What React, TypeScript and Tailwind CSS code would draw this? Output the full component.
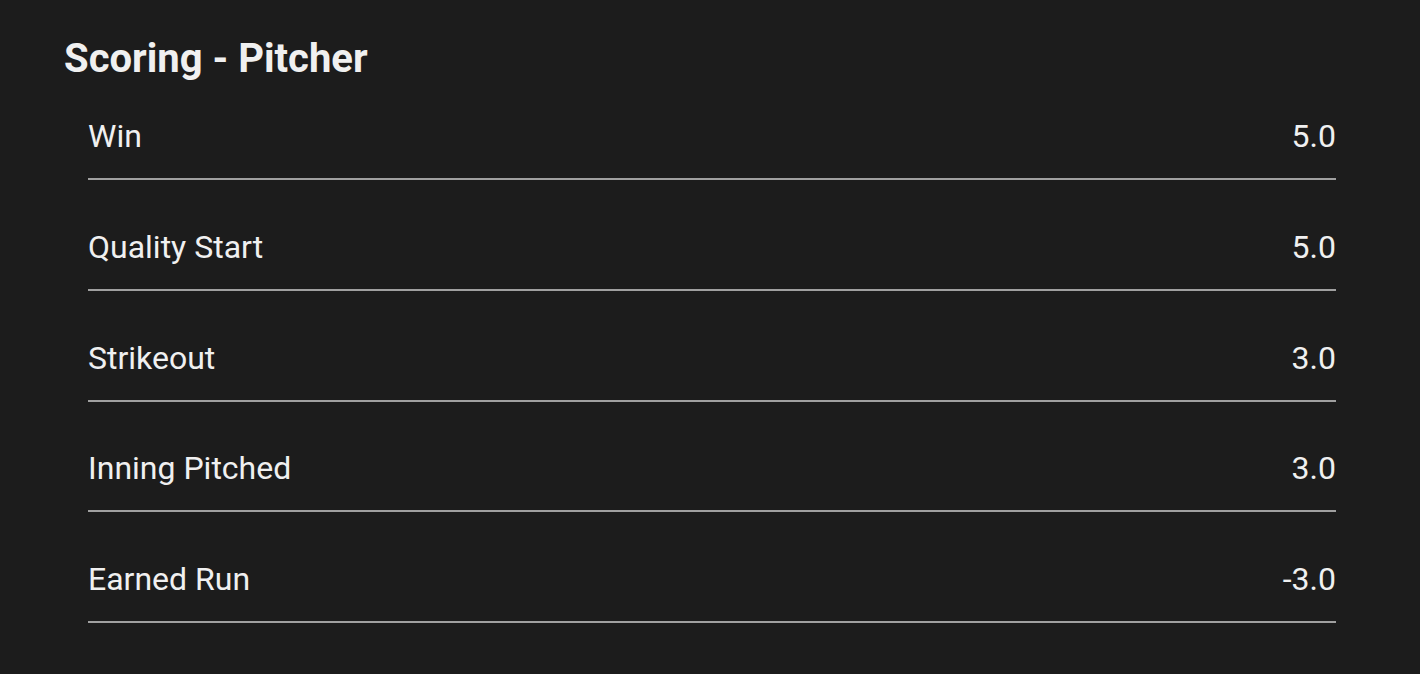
import React from "react";

const rows: [string, string][] = [
  ["Win", "5.0"],
  ["Quality Start", "5.0"],
  ["Strikeout", "3.0"],
  ["Inning Pitched", "3.0"],
  ["Earned Run", "-3.0"],
];

export default function App() {
  return (
    <div
      className="w-[1420px] h-[674px] bg-[#1c1c1c] text-[#f0f0f0] pl-[64px] pt-[35px] overflow-hidden"
      style={{ fontFamily: "Roboto, 'Noto Sans', sans-serif" }}
    >
      <h1 className="text-[40px] leading-[48px] font-bold">Scoring - Pitcher</h1>
      <div className="ml-[24px] w-[1248px] mt-[34px] flex flex-col gap-[47.75px]">
        {rows.map(([label, value]) => (
          <div
            key={label}
            className="flex justify-between items-start text-[32px] leading-[38px] pb-[23px] border-b-2 border-[#a0a0a0]"
          >
            <span>{label}</span>
            <span>{value}</span>
          </div>
        ))}
      </div>
    </div>
  );
}
